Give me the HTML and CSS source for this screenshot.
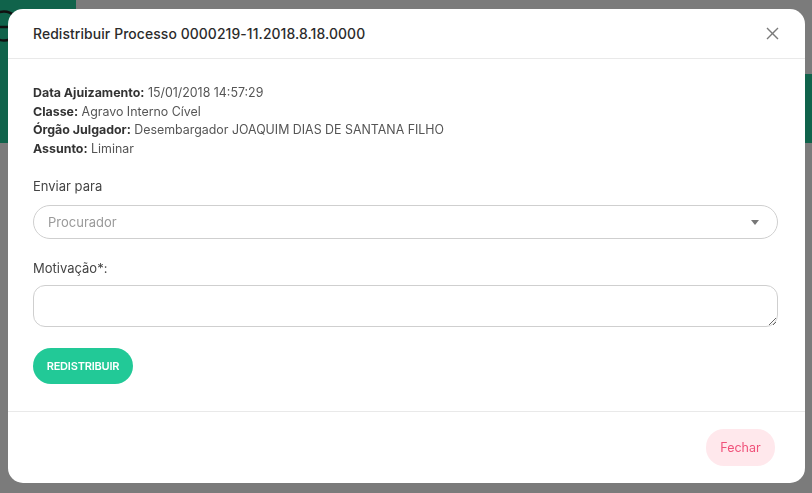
FILE: index.html
```html
<!DOCTYPE html>
<html lang="pt-BR">
<head>
<meta charset="utf-8">
<title>Redistribuir Processo</title>
<link rel="stylesheet" href="styles.css">
</head>
<body>
<div class="page">
  <div class="topbar">
    <div class="logo">
      <svg width="76" height="74" viewBox="0 0 76 74">
        <circle cx="4" cy="26" r="14.5" fill="none" stroke="#111" stroke-width="2.5"/>
        <path d="M0 27 H19" stroke="#111" stroke-width="2.5"/>
      </svg>
    </div>
  </div>
  <div class="greenband">
    <div class="greenleft"></div>
  </div>
</div>

<div class="modal">
  <div class="modal-header">
    <h1 class="modal-title">Redistribuir Processo 0000219-11.2018.8.18.0000</h1>
    <button class="close" aria-label="Fechar">
      <svg width="13" height="13" viewBox="0 0 13 13"><path d="M1 1 L12 12 M12 1 L1 12" stroke="#7a7a7a" stroke-width="1.4" fill="none"/></svg>
    </button>
  </div>
  <div class="modal-body">
    <div class="info">
      <div><b>Data Ajuizamento:</b> 15/01/2018 14:57:29</div>
      <div><b>Classe:</b> Agravo Interno Cível</div>
      <div><b>Órgão Julgador:</b> Desembargador JOAQUIM DIAS DE SANTANA FILHO</div>
      <div><b>Assunto:</b> Liminar</div>
    </div>
    <label class="label label-send">Enviar para</label>
    <div class="select">
      <span class="placeholder">Procurador</span>
      <span class="caret"></span>
    </div>
    <label class="label label-mot">Motivação*:</label>
    <textarea class="textarea"></textarea>
    <button class="btn-primary">REDISTRIBUIR</button>
  </div>
  <div class="modal-footer">
    <button class="btn-close">Fechar</button>
  </div>
</div>
</body>
</html>
```
FILE: styles.css
```css
* { box-sizing: border-box; }
html, body { margin: 0; padding: 0; }
body {
  width: 812px;
  height: 493px;
  overflow: hidden;
  background: #7b7b7b;
  font-family: "Inter", "Open Sans", sans-serif;
  color: #333;
}
.page { width: 812px; height: 493px; }
.topbar { height: 74px; background: #7b7b7b; display: flex; }
.logo { width: 76px; height: 74px; background: #10634b; }
.logo svg { display: block; }
.greenband { height: 69px; background: #10634b; }
.greenleft { width: 76px; height: 69px; background: #10634b; }

.modal {
  position: fixed;
  left: 8px;
  top: 9px;
  width: 797px;
  height: 474px;
  background: #fff;
  border-radius: 15px;
  display: flex;
  flex-direction: column;
}
.modal-header {
  height: 50px;
  border-bottom: 1px solid #e9e9e9;
  display: flex;
  align-items: center;
  justify-content: space-between;
  padding: 0 27px 0 25px;
}
.modal-title {
  margin: 0;
  font-size: 13.9px;
  font-weight: 500;
  color: #2b2b2b;
  letter-spacing: 0.1px;
}
.close {
  border: 0;
  background: none;
  padding: 0;
  margin-right: -1px;
  width: 13px;
  height: 13px;
  display: flex;
}
.modal-body {
  padding: 25px 27px 27px 25px;
  border-bottom: 1px solid #e9e9e9;
  display: flex;
  flex-direction: column;
  align-items: flex-start;
}
.info {
  font-size: 12.4px;
  line-height: 18.5px;
  color: #555;
}
.info b { color: #333; font-weight: 700; }
.label {
  font-size: 13px;
  line-height: 20px;
  color: #444;
}
.label-send { margin-top: 18px; }
.label-mot { margin-top: 19px; }
.select {
  margin-top: 9px;
  width: 100%;
  height: 34px;
  border: 1px solid #cfcfcf;
  border-radius: 17px;
  display: flex;
  align-items: center;
  justify-content: space-between;
  padding: 0 18px 0 14px;
}
.placeholder { font-size: 13px; color: #9a9a9a; }
.caret {
  width: 0; height: 0;
  border-left: 4px solid transparent;
  border-right: 4px solid transparent;
  border-top: 5px solid #777;
}
.textarea {
  margin-top: 7px;
  width: 100%;
  height: 42px;
  border: 1px solid #cfcfcf;
  border-radius: 12px;
  font-family: inherit;
  resize: vertical;
  display: block;
}
.btn-primary {
  margin-top: 21px;
  width: 100px;
  height: 36px;
  border: 0;
  border-radius: 18px;
  background: #22c997;
  color: #fff;
  font-family: inherit;
  font-size: 11px;
  font-weight: 600;
  letter-spacing: -0.2px;
}
.modal-footer {
  flex: 1;
  display: flex;
  align-items: center;
  justify-content: flex-end;
  padding: 0 30px 0 25px;
}
.btn-close {
  width: 69px;
  height: 37px;
  border: 0;
  border-radius: 18px;
  background: #ffe8ec;
  color: #f0527a;
  font-family: inherit;
  font-size: 12.5px;
  margin-top: -1px;
}
```
